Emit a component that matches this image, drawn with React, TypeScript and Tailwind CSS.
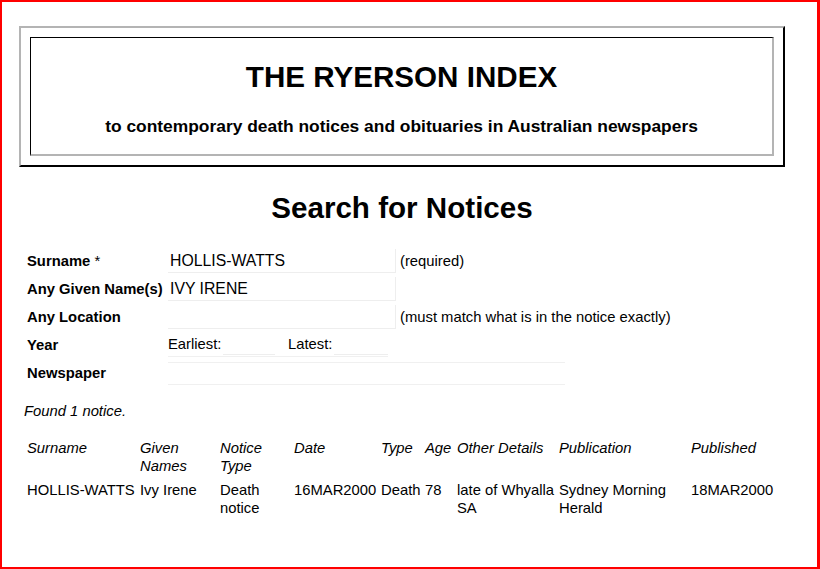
import React from "react";

const cols = "grid grid-cols-[113px_80px_74px_87px_44px_32px_102px_132px_100px]";

export default function App() {
  return (
    <div className="w-[820px] h-[569px] bg-white border-t-2 border-l-2 border-b-2 border-r-[3px] border-[#ff0000] overflow-hidden text-black font-['Liberation_Sans',Arial,sans-serif]">
      <div className="ml-[17px] mt-[24px] w-[766px] h-[141px] border-2 border-t-[#b4b4b4] border-l-[#b4b4b4] border-b-black border-r-black p-[9px]">
        <div className="h-full border-t border-l border-t-black border-l-black border-b-2 border-r-2 border-b-[#b4b4b4] border-r-[#b4b4b4] flex flex-col items-center">
          <div className="mt-[22px] text-[29.6px] leading-[34px] font-bold">THE RYERSON INDEX</div>
          <div className="mt-[22px] text-[17.4px] leading-[20px] font-bold">to contemporary death notices and obituaries in Australian newspapers</div>
        </div>
      </div>

      <h1 className="mt-[24px] text-center text-[29.6px] leading-[34px] font-bold pr-[15px]">Search for Notices</h1>

      <div className="mt-[22px] ml-[25px] flex flex-col text-[14.8px]">
        <div className="flex items-center h-[28px]">
          <div className="w-[141px] font-bold">Surname <span className="font-normal">*</span></div>
          <div className="w-[228px] h-[24px] flex items-center pl-[2px] text-[15.8px] border-r border-b border-[#eeeeee]">HOLLIS-WATTS</div>
          <div className="ml-[4px]">(required)</div>
        </div>
        <div className="flex items-center h-[28px]">
          <div className="w-[141px] font-bold">Any Given Name(s)</div>
          <div className="w-[228px] h-[24px] flex items-center pl-[2px] text-[15.8px] border-r border-b border-[#eeeeee]">IVY IRENE</div>
        </div>
        <div className="flex items-center h-[28px]">
          <div className="w-[141px] font-bold">Any Location</div>
          <div className="w-[228px] h-[24px] border-r border-b border-[#eeeeee]"></div>
          <div className="ml-[4px]">(must match what is in the notice exactly)</div>
        </div>
        <div className="flex items-center h-[28px]">
          <div className="w-[141px] font-bold self-start pt-[3px]">Year</div>
          <div className="flex items-center h-[24px] border-b border-[#f0f0f0] w-[220px]">
            <span>Earliest:</span>
            <div className="ml-[2px] w-[52px] h-[20px] border-b border-[#eeeeee]"></div>
            <span className="ml-[13px]">Latest:</span>
            <div className="ml-[2px] w-[54px] h-[20px] border-b border-[#eeeeee]"></div>
          </div>
        </div>
        <div className="flex items-center h-[28px]">
          <div className="w-[141px] font-bold">Newspaper</div>
          <div className="w-[397px] h-[23px] border-t border-b border-[#f0f0f0]"></div>
        </div>
      </div>

      <div className="mt-[15px] ml-[22px] italic text-[14.8px] leading-[18px]">Found 1 notice.</div>

      <div className="mt-[19px] ml-[25px] text-[14.8px] leading-[18px]">
        <div className={`${cols} italic`}>
          <div>Surname</div>
          <div>Given<br />Names</div>
          <div>Notice<br />Type</div>
          <div>Date</div>
          <div>Type</div>
          <div>Age</div>
          <div>Other Details</div>
          <div>Publication</div>
          <div>Published</div>
        </div>
        <div className={`${cols} mt-[6px]`}>
          <div>HOLLIS-WATTS</div>
          <div>Ivy Irene</div>
          <div>Death<br />notice</div>
          <div>16MAR2000</div>
          <div>Death</div>
          <div>78</div>
          <div>late of Whyalla<br />SA</div>
          <div>Sydney Morning<br />Herald</div>
          <div>18MAR2000</div>
        </div>
      </div>
    </div>
  );
}
